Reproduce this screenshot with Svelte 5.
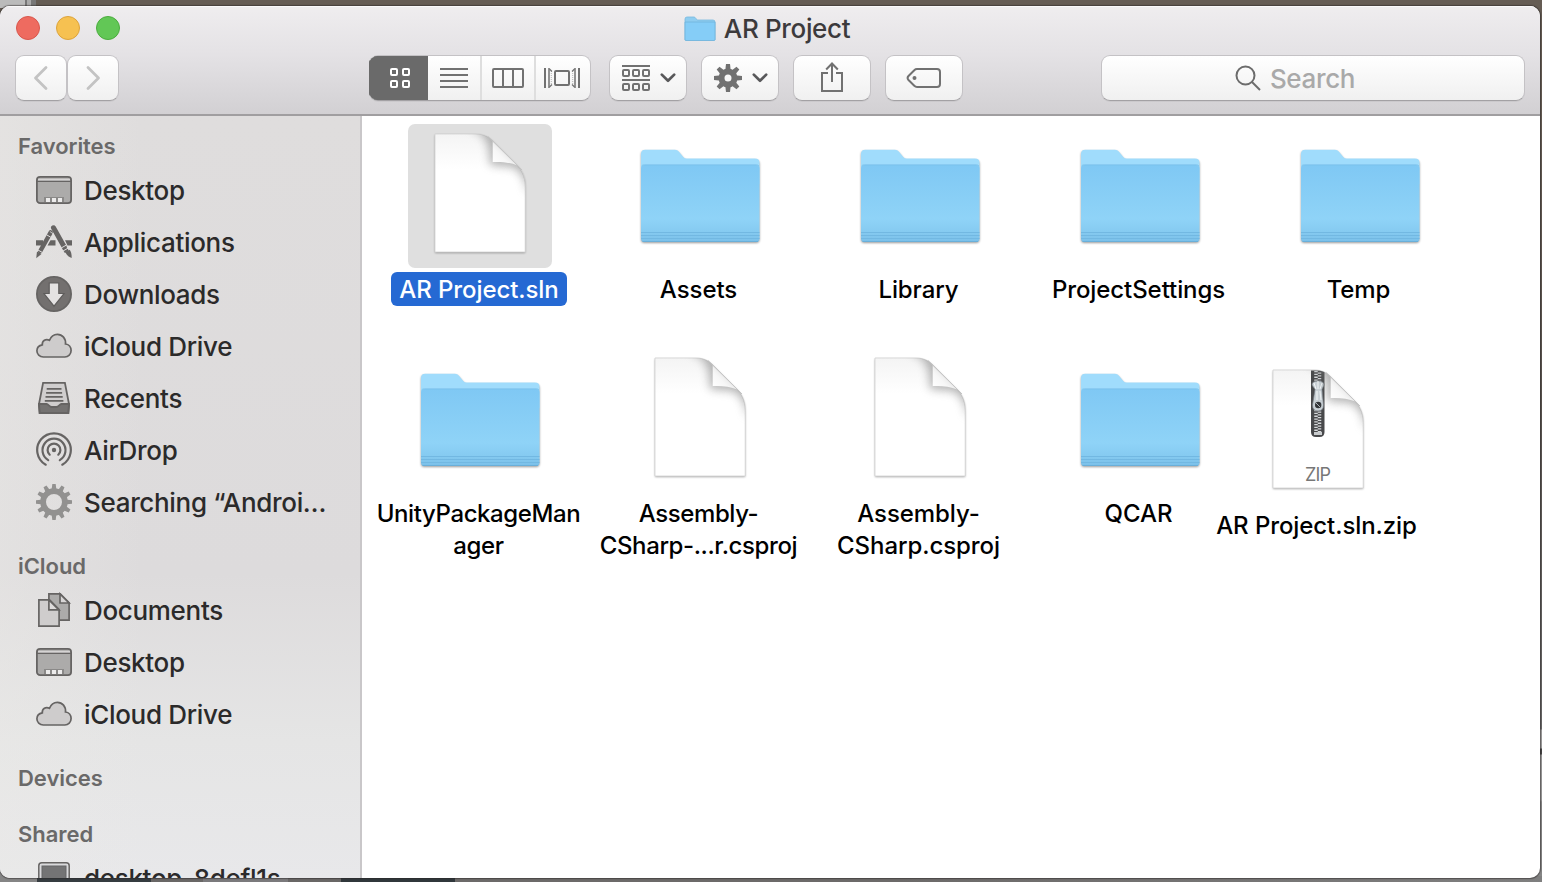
<script>
  const favorites = [
    { icon: 'desktop', label: 'Desktop' },
    { icon: 'apps', label: 'Applications' },
    { icon: 'downloads', label: 'Downloads' },
    { icon: 'cloud', label: 'iCloud Drive' },
    { icon: 'recents', label: 'Recents' },
    { icon: 'airdrop', label: 'AirDrop' },
    { icon: 'gear', label: 'Searching “Androi…' }
  ];
  const icloud = [
    { icon: 'documents', label: 'Documents' },
    { icon: 'desktop', label: 'Desktop' },
    { icon: 'cloud', label: 'iCloud Drive' }
  ];
  const sections = [
    { title: 'Favorites', items: favorites },
    { title: 'iCloud', items: icloud },
    { title: 'Devices', items: [] },
    { title: 'Shared', items: [{ icon: 'computer', label: 'desktop-8defl1s' }] }
  ];
  const files = [
    { kind: 'doc', lines: ['AR Project.sln'], selected: true },
    { kind: 'folder', lines: ['Assets'] },
    { kind: 'folder', lines: ['Library'] },
    { kind: 'folder', lines: ['ProjectSettings'] },
    { kind: 'folder', lines: ['Temp'] },
    { kind: 'folder', lines: ['UnityPackageMan', 'ager'], tight: true },
    { kind: 'doc', lines: ['Assembly-', 'CSharp-...r.csproj'], tight: true },
    { kind: 'doc', lines: ['Assembly-', 'CSharp.csproj'] },
    { kind: 'folder', lines: ['QCAR'] },
    { kind: 'zip', lines: ['AR Project.sln.zip'], moved: true }
  ];
  const teeth = (n) => Array.from({ length: n }, (_, i) => (i * 360) / n);
</script>

{#snippet sideIcon(name)}
  <svg class="side-icon" width="36" height="36" viewBox="0 0 36 36" fill="none" stroke="#666463" stroke-width="1.8">
    {#if name === 'desktop'}
      <rect x=".9" y="4.9" width="34.2" height="26.2" rx="3.2" fill="#acabaa" />
      <path d="M2 6.8h32v2H2z" fill="#d5d3d3" stroke="none" />
      <path d="M1 9.4h34" stroke-width="1.4" />
      <path d="M8 25h20v5H8z" fill="#8a8988" stroke="none" />
      <path d="M10 26h4v4h-4zM16 26h4v4h-4zM22 26h4v4h-4z" fill="#ecebeb" stroke="none" />
    {:else if name === 'apps'}
      <path d="M0 16.2h7v5.4H0zM14.5 16.2h5v5.4h-8zM29 16.2h7v5.4h-4.5z" fill="#666463" stroke="none" />
      <path d="M17.5 3.8 28 22.5" stroke-width="5" stroke-linecap="round" />
      <path d="M28 23.2 30.8 27.7" stroke-width="4.6" />
      <path d="m29.3 28.2 4.3-2.4c1.6 2 2.2 4.8 2 8.2-2.8-1-5-2.9-6.3-5.8Z" fill="#666463" stroke="none" />
      <path d="M14.7 8.4 4.2 27.3" stroke-width="4.4" stroke-linecap="round" />
      <path d="m1 27.5 4.5 2.5L.2 34.2Z" fill="#666463" stroke="none" />
      <path d="m10.4 10.7 4.5 2.6M2 26l4.4 2.5M25.2 24l5-2.8M27 27l5-2.8" stroke="#dfdddd" stroke-width="1" />
      <path d="m13.8 7.4 4.2 3" stroke="#dfdddd" stroke-width=".8" />
    {:else if name === 'downloads'}
      <circle cx="18" cy="18" r="17.1" fill="#73706f" />
      <path d="M13.2 7h9.6v10.5H28L18 30.2 8 17.5h5.2Z" fill="#e4e2e2" stroke="#5f5d5c" stroke-width="1.2" />
    {:else if name === 'cloud'}
      <path d="M7.3 29C3.600 29 .9 26.200 .9 22.800c0-3.200 2.500-5.500 5.400-6-.4-4.200 3.600-6.500 7.200-4.500 1.400-3.600 4.400-6 7.900-6 4.900 0 8.700 4.300 8.100 9.700 3.300.3 5.600 3.200 5.600 6.600 0 3.700-2.800 6.400-6.200 6.400Z" fill="#cecccc" stroke-width="1.7" />
    {:else if name === 'recents'}
      <path d="M7.1 2.9h21.8l4.2 21.6-.7 8.6H3.6l-.7-8.6Z" fill="#d0cece" />
      <path d="M3 24h7.700c1.700 0 2.600 3 5 3h4.600c2.400 0 3.300-3 5-3H33l-.8 9H3.800Z" fill="#747271" />
      <path d="M10.700 8.900h14.800M10.100 12.900h16M9.500 16.900h17.200M8.800 20.900h18.600" />
    {:else if name === 'airdrop'}
      <circle cx="18" cy="18" r="2.2" fill="#666463" stroke="none" />
      <g stroke-width="2.2" stroke-linecap="round">
        <path d="M13.7 22.7a6.4 6.4 0 1 1 8.6 0" />
        <path d="M12.2 28.1a11.5 11.5 0 1 1 11.6 0" />
        <path d="M9.7 32.7a16.8 16.8 0 1 1 16.6 0" />
      </g>
    {:else if name === 'gear'}
      <g fill="#929190" stroke="none">
        {#each teeth(12) as a}
          <path d="M15.4 7 16.300 0h3.400l.9 7z" transform="rotate({a} 18 18)" />
        {/each}
      </g>
      <circle cx="18" cy="18" r="10.9" stroke="#929190" stroke-width="5.800" />
    {:else if name === 'documents'}
      <g stroke-width="1.7">
        <path d="M12.9 1.9h11.3l8.900 9v17.200H12.900Z" fill="#acabaa" />
        <path d="M24 2v9h9Z" fill="#d8d6d6" />
        <path d="M2.900 7.900h10.700l9.500 9.800v16.400H2.900Z" fill="#cfcdcd" />
        <path d="M12.900 8v9.800h10Z" fill="#dddbdb" />
      </g>
    {:else}
      <rect x="2.8" y="2.8" width="30.4" height="26" rx="3" fill="#d9d9db" stroke-width="1.5" />
      <rect x="6" y="6" width="24" height="20" fill="#747475" stroke="#656566" stroke-width="1" />
    {/if}
  </svg>
{/snippet}

{#snippet docShape()}
  <path d="M27 10H68C76 10 81 13 85 17L108 40C114 46 117.200 53 117.200 62V128H27Z" fill="#000" opacity=".35" filter="url(#soft)" />
  <path d="M27 10H68C76 10 81 13 85 17L108 40C114 46 117.200 53 117.200 62V128H27Z" fill="url(#paper)" stroke="#d2d2d2" stroke-width=".8" />
{/snippet}

{#snippet fold()}
  <g clip-path="url(#page)">
    <path d="M62 4C78 9 82 20 82 41L104 43C112 46 118 54 119 70L132 30 90 -6Z" fill="#777" opacity=".55" filter="url(#wide)" />
  </g>
  <path d="M84.700 17V38C93 37.500 102 38.500 109.500 41.500Z" fill="url(#curl)" />
  <path d="M80 12.500 114 46" stroke="#c4c4c4" stroke-width="1" fill="none" />
{/snippet}

{#snippet fileIcon(kind)}
  <svg class="art" width="144" height="144" viewBox="0 0 144 144">
    {#if kind === 'folder'}
      <path d="M13 112V30q0-4 4-4H47q2.500 0 4 2l4.500 5.500q1.300 1.500 3.500 1.500H127q4.500 0 4.500 4V114.500q0 3.500-3.500 3.500H16.500q-3.500 0-3.500-3.500Z" fill="#000" opacity=".4" filter="url(#soft)" />
      <path d="M13 60V30q0-4.300 4.200-4.300H47q2.500 0 4 2l4.300 5.200q1.300 1.700 3.500 1.700H127q4.500 0 4.500 4.200V60Z" fill="#a0dcfc" />
      <path d="M13 44.500q0-3.500 3.500-3.500H128q3.500 0 3.500 3.500V114.500q0 3.500-3.500 3.500H16.500q-3.500 0-3.500-3.500Z" fill="url(#blue)" />
      <path d="M13.500 42q1-1.200 3-1.200H128q2 0 3 1.200" stroke="#78bfea" stroke-width=".8" fill="none" />
      <path d="M13 108.500H131.500M13 111.500H131.500M13 114.500H131.500" stroke="#72b8e2" stroke-width="1" />
      <path d="M14.500 117.500H130" stroke="#6aafd9" stroke-width="1" />
    {:else}
      {@render docShape()}
      {#if kind === 'zip'}
        <g clip-path="url(#page)">
          <path d="M65 10.500H78.500V72q0 5-5 5h-3.500q-5 0-5-5Z" fill="#48494b" />
          <path d="M70 11V26M70 50V74" stroke="#d5d8da" stroke-width="3.500" stroke-dasharray="1.300 1.500" />
          <path d="M73.500 12.400V26M73.500 51.400V74" stroke="#d5d8da" stroke-width="3.500" stroke-dasharray="1.300 1.500" />
          <path d="M68 72h8v3h-8z" fill="#c8cbcd" />
          <path d="M66 25q0-4 6-4t6 4l-2 4.500L77.500 45q0 6-5.500 6t-5.500-6L69 29.500Z" fill="#c8d0d5" stroke="#73797e" stroke-width=".7" />
          <path d="m68 23 2 6M72 21v8M76 23l-2 6" stroke="#f4f7f8" stroke-width="1" />
          <path d="M71 31v9M74 31l1 9" stroke="#eff3f5" stroke-width="1.200" />
          <circle cx="72.200" cy="45" r="3.200" fill="#34373a" />
          <path d="m70 43 4 4" stroke="#aeb4b8" stroke-width="1" />
        </g>
      {/if}
      {@render fold()}
      {#if kind === 'zip'}
        <text x="72" y="120.500" text-anchor="middle" textLength="26" class="zip-text">ZIP</text>
      {/if}
    {/if}
  </svg>
{/snippet}

{#snippet chevron()}
  <svg width="16" height="12" viewBox="0 0 16 12" fill="none" stroke="#58585a" stroke-width="2.700" stroke-linecap="round" stroke-linejoin="round"><path d="m1.800 2.600 6.200 6.200 6.200-6.200" /></svg>
{/snippet}

<svg class="defs" width="0" height="0" aria-hidden="true">
  <defs>
    <filter id="soft" x="-10%" y="-10%" width="120%" height="125%"><feGaussianBlur stdDeviation="1" /><feOffset dy="1" /></filter>
    <filter id="wide" x="-60%" y="-60%" width="220%" height="220%"><feGaussianBlur stdDeviation="5" /></filter>
    <linearGradient id="paper" x1="0" y1="0" x2="0" y2="1"><stop offset="0" stop-color="#f4f4f4" /><stop offset=".3" stop-color="#fff" /><stop offset="1" stop-color="#fff" /></linearGradient>
    <linearGradient id="curl" x1="0" y1="1" x2=".6" y2=".4"><stop offset="0" stop-color="#fff" /><stop offset=".6" stop-color="#f7f7f7" /><stop offset="1" stop-color="#e4e4e4" /></linearGradient>
    <linearGradient id="blue" x1="0" y1="0" x2="0" y2="1"><stop offset="0" stop-color="#7fc8f4" /><stop offset=".7" stop-color="#8fd3f7" /><stop offset=".86" stop-color="#86cbf1" /><stop offset="1" stop-color="#7bc0e9" /></linearGradient>
    <clipPath id="page"><path d="M27 10H68C76 10 81 13 85 17L108 40C114 46 117.200 53 117.200 62V128H27Z" /></clipPath>
  </defs>
</svg>

<div class="desk">
  <div class="window">
    <header>
      <div class="titlebar">
        <div class="lights"><i class="red"></i><i class="amber"></i><i class="green"></i></div>
        <div class="title">
          <svg width="32" height="26" viewBox="0 0 32 26">
            <path d="M1 3q0-2 2-2h7q1 0 2 1.500L13.200 4H29q2 0 2 2v18H1Z" fill="#8fcdf0" stroke="#77b9df" stroke-width=".8" />
            <path d="M1 6h30v17.500q0 1-1 1H2q-1 0-1-1Z" fill="#85cdf7" stroke="#6fb3da" stroke-width=".8" />
          </svg>
          <span>AR Project</span>
        </div>
      </div>
      <div class="tools">
        <div class="nav">
          <button class="btn" aria-label="Back"><svg width="50" height="44" fill="none" stroke="#c3c3c3" stroke-width="2.800" stroke-linecap="round" stroke-linejoin="round"><path d="M30 11.500 19.500 22 30 32.500" /></svg></button>
          <button class="btn" aria-label="Forward"><svg width="50" height="44" fill="none" stroke="#c3c3c3" stroke-width="2.800" stroke-linecap="round" stroke-linejoin="round"><path d="M20 11.500 30.500 22 20 32.500" /></svg></button>
        </div>
        <div class="views">
          <button class="on" aria-label="Icons"><svg width="22" height="22" fill="none" stroke="#fff" stroke-width="2"><rect x="2" y="2" width="6" height="6" rx="1" /><rect x="14" y="2" width="6" height="6" rx="1" /><rect x="2" y="14" width="6" height="6" rx="1" /><rect x="14" y="14" width="6" height="6" rx="1" /></svg></button>
          <button aria-label="List"><svg width="28" height="22" stroke="#717171" stroke-width="2"><path d="M0 2h28M0 8h28M0 14h28M0 20h28" /></svg></button>
          <button aria-label="Columns"><svg width="32" height="22" fill="none" stroke="#717171" stroke-width="2"><rect x="1" y="2" width="30" height="18" rx="1" /><path d="M11 2v18M21 2v18" /></svg></button>
          <button aria-label="Cover Flow"><svg width="36" height="22" fill="none" stroke="#717171" stroke-width="2"><rect x="11" y="4" width="14" height="14" rx="1" /><path d="M1 1v20M35 1v20" /><path d="M5 1v20M31 1v20" stroke-width="1.500" /><path d="M5.500 2 8 4.500M5.500 20 8 17.500M30.500 2 28 4.500M30.500 20 28 17.500" stroke-width="1.200" /><path d="M7.300 4v14M28.700 4v14" stroke-width="1" stroke-dasharray="1 1" opacity=".5" /></svg></button>
        </div>
        <button class="btn wide menu" aria-label="Arrange">
          <svg width="28" height="28" fill="none" stroke="#717171" stroke-width="2"><path d="M0 2h28M0 16h28" />{#each [1, 11, 21] as x}<rect {x} y="6" width="6" height="6" rx="1" /><rect {x} y="20" width="6" height="6" rx="1" />{/each}</svg>
          {@render chevron()}
        </button>
        <button class="btn wide menu" aria-label="Action">
          <svg width="28" height="28" viewBox="0 0 28 28" fill="#717171">{#each teeth(8) as a}<path d="M11.200 7 12 0h4l.8 7z" transform="rotate({a} 14 14)" />{/each}<circle cx="14" cy="14" r="6.500" fill="none" stroke="#717171" stroke-width="6" /></svg>
          {@render chevron()}
        </button>
        <button class="btn wide" aria-label="Share"><svg class="share" width="24" height="32" fill="none" stroke="#717171" stroke-width="2"><path d="M8 12H2v18h20V12h-6M12 21V2.500M6.200 8.500 12 2.500l5.800 6" /></svg></button>
        <button class="btn wide" aria-label="Tags"><svg width="36" height="22" fill="none" stroke="#717171" stroke-width="2"><path d="M11 2h20q3 0 3 3v12q0 3-3 3H11q-1.500 0-2.700-1.200L2.500 13q-1.800-2 0-4L8.300 3.200Q9.500 2 11 2Z" /><circle cx="8.500" cy="11" r="2" fill="#717171" stroke="none" /></svg></button>
        <div class="search">
          <svg width="26" height="26" fill="none" stroke="#6c6c6c" stroke-width="2"><circle cx="10.500" cy="10.500" r="9" /><path d="m17 17 8 8" /></svg>
          <span>Search</span>
        </div>
      </div>
    </header>
    <main>
      <nav class="sidebar">
        {#each sections as s}
          <section>
            <h2>{s.title}</h2>
            {#each s.items as item}
              <div class="row">{@render sideIcon(item.icon)}<span>{item.label}</span></div>
            {/each}
          </section>
        {/each}
      </nav>
      <div class="files">
        {#each files as f}
          <div class="file" class:selected={f.selected} class:moved={f.moved} class:tight={f.tight}>
            <div class="thumb">{@render fileIcon(f.kind)}</div>
            <div class="name">{#each f.lines as line}<span>{line}</span>{/each}</div>
          </div>
        {/each}
      </div>
    </main>
  </div>
</div>

<style>
  :global(body) { overflow: hidden; }
  .defs { position: absolute; }
  .desk {
    box-sizing: border-box; width: 1542px; height: 882px; padding: 6px 2px 4px 0; overflow: hidden;
    font-family: Inter, "Liberation Sans", sans-serif; font-weight: 450;
    background:
      linear-gradient(90deg, #bbb 0 25px, #777 25px 27px, #aaa 27px 31px, #777 31px 36px, transparent 36px) 0 0 / 100% 8px no-repeat,
      linear-gradient(90deg, #858585 0 37px, #353c40 37px 151px, #696766 151px 203px, #7b7a7c 203px 288px, #696766 288px 341px, #30373b 341px 455px, #6c6a69 455px 900px, #7f7f7f) 0 100% / 100% 6px no-repeat,
      linear-gradient(#655c54 0 120px, #58534f 400px, #696969 729px, #9c9c9c 730px 748px, #444 749px 754px, #999 755px 800px, #868686 802px);
  }
  .window {
    display: flex; flex-direction: column; height: 872px; overflow: hidden;
    border-radius: 10px; box-shadow: 0 0 1px 1px rgba(40, 35, 35, .5); background: #fff;
  }
  header {
    box-sizing: border-box; height: 110px; flex: none; padding-top: 2px;
    background: linear-gradient(#efedef, #e4e2e5 45%, #d2d0d3); border-bottom: 2px solid #a09ea0;
    box-shadow: inset 0 1px #faf9fa;
  }
  .titlebar { display: grid; grid-template-columns: 1fr auto 1fr; align-items: center; height: 42px; }
  .lights { display: flex; gap: 16px; padding-left: 16px; }
  .lights i { box-sizing: border-box; width: 24px; height: 24px; border-radius: 50%; border: 1px solid; margin-top: -2px; }
  .lights .red { background: #ee6b60; border-color: #d8574d; }
  .lights .amber { background: #f6c151; border-color: #dca33c; }
  .lights .green { background: #62c756; border-color: #4bac3e; }
  .title { display: flex; align-items: center; gap: 8px; padding-right: 6px; font-size: 26px; letter-spacing: -.35px; color: #3c3a3c; }
  .title svg { margin-top: -1px; }
  .title span { margin-top: -2px; }
  .tools { display: flex; align-items: flex-start; padding: 5px 15px 0; }
  button { font: inherit; padding: 0; border: 0; background: none; display: flex; align-items: center; justify-content: center; }
  .btn, .views, .search {
    box-sizing: border-box; height: 46px; border: 1px solid #c4c2c5; border-bottom-color: #a3a1a4; border-radius: 9px;
    background: linear-gradient(#fff, #f0f0f0); box-shadow: 0 1px 0 rgba(0, 0, 0, .05);
  }
  .nav { display: flex; margin-right: 250px; }
  .nav .btn { width: 52px; }
  .views { display: flex; width: 222px; overflow: hidden; margin-right: 18px; border-left: 0; }
  .views button { width: 54px; flex: none; box-sizing: border-box; border-left: 2px solid #dedede; }
  .views .on { width: 59px; border-left: 0; background: #6a6a6a; padding-left: 3px; box-shadow: 0 -1px #6a6a6a, 0 1px #6a6a6a; }
  .views .on + button { border-left: 0; width: 52px; }
  .wide { width: 78px; margin-right: 14px; }
  .menu { gap: 10px; padding-left: 2px; }
  .share { margin-top: -2px; }
  .search { flex: 1; margin-left: 124px; display: flex; align-items: center; justify-content: center; gap: 9px; color: #a9a9a9; font-size: 26px; letter-spacing: -.35px; padding-right: 36px; }
  main { display: flex; flex: 1; min-height: 0; }
  .sidebar {
    box-sizing: border-box; width: 362px; flex: none; padding-top: 12px; border-right: 2px solid #c9c7c9; overflow: hidden;
    background: linear-gradient(90deg, rgba(235, 234, 231, .4), rgba(235, 234, 231, 0) 40%), linear-gradient(#dfdddd 0, #dddbdc 60%, #e5e5e5 82%, #e8e8ea);
  }
  section { margin-bottom: 20px; }
  h2 { margin: 0; padding-left: 18px; height: 36px; line-height: 36px; font-size: 22px; font-weight: 600; letter-spacing: -.05px; color: #6a6969; }
  .row { display: flex; align-items: center; gap: 12px; height: 52px; padding-left: 36px; font-size: 26px; letter-spacing: -.32px; color: #2b2a2a; white-space: nowrap; }
  .side-icon { flex: none; }
  .files { display: grid; grid-template-columns: repeat(5, 220px); grid-auto-rows: 224px; padding: 8px 0 0 8px; align-content: start; }
  .file { display: flex; flex-direction: column; align-items: center; }
  .moved { transform: translate(-42px, 12px); }
  .thumb { width: 144px; height: 144px; border-radius: 7px; }
  .art { display: block; }
  .selected .thumb { background: #dfdfdf; }
  .name { display: flex; flex-direction: column; align-items: center; margin: 6px 3px 0 0; font-size: 24px; line-height: 32px; letter-spacing: -.08px; color: #000; white-space: nowrap; }
  .tight .name { letter-spacing: -.4px; }
  .selected .name { margin: 4px 2px 0 0; padding: 2px 8px 0; border-radius: 6px; background: #2569d3; color: #fff; }
  .zip-text { font: 18px Inter, sans-serif; fill: #777; }
</style>
